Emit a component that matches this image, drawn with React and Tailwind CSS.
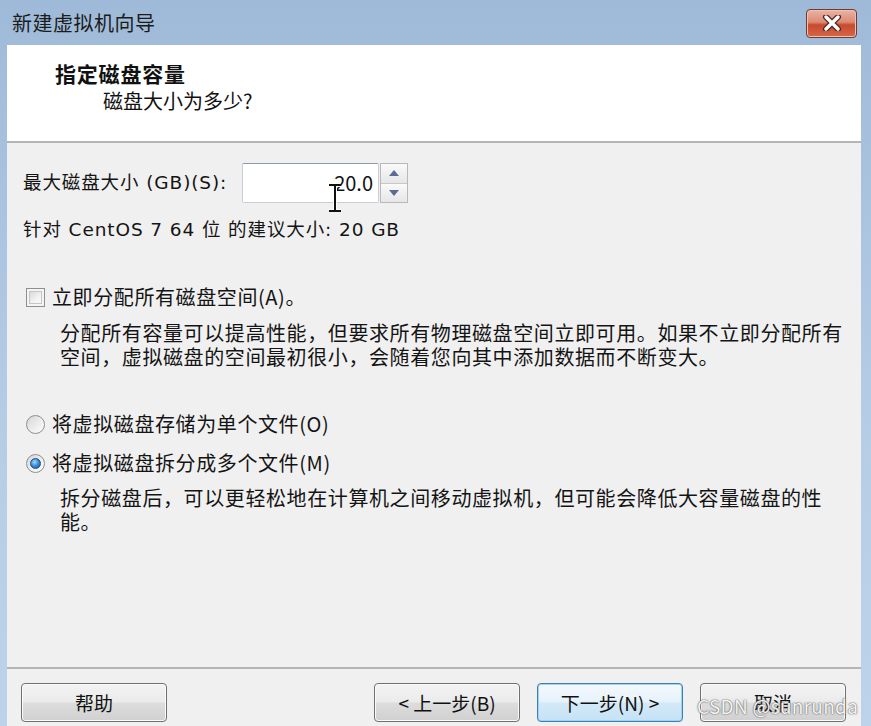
import React from "react";

const cjk = { fontFamily: '"Noto Sans CJK SC", "Noto Sans", sans-serif' };
// label row uses a wider latin face, like the Segoe UI of the dialog
const wide = { fontFamily: '"DejaVu Sans", "Noto Sans CJK SC", sans-serif' };

const WinButton = ({ children, focused }) => (
  <button
    type="button"
    className={`h-[39px] w-[146px] rounded-[4px] border text-[19px] leading-none text-[#111] ${
      focused
        ? "border-[#3c7fb1] bg-[linear-gradient(180deg,#f4f9fd_0%,#e6f2fb_48%,#d3e9f8_52%,#c6e2f6_100%)] shadow-[inset_0_0_0_1px_#9fd2f5]"
        : "border-[#707070] bg-[linear-gradient(180deg,#f3f3f3_0%,#ebebeb_48%,#dddddd_52%,#d0d0d0_100%)] shadow-[inset_0_0_0_1px_#fbfbfb]"
    }`}
    style={cjk}
  >
    {children}
  </button>
);

const Checkbox = () => (
  <span className="flex h-[19px] w-[19px] items-center justify-center border border-[#8f8f8f] bg-[#f4f4f4]">
    <span className="h-[13px] w-[13px] border border-[#c6c6c6] bg-[linear-gradient(135deg,#d9d9d9_0%,#f2f2f2_60%,#fafafa_100%)]" />
  </span>
);

const Radio = ({ checked }) => (
  <span className="flex h-[19px] w-[19px] items-center justify-center rounded-full border border-[#8f8f8f] bg-[linear-gradient(135deg,#d4d4d4_0%,#f6f6f6_70%)]">
    {checked ? (
      <span className="h-[11px] w-[11px] rounded-full border border-[#1f4f86] bg-[radial-gradient(circle_at_40%_35%,#a9dcff_0%,#3d8fd6_45%,#12508f_100%)]" />
    ) : (
      <span className="h-[13px] w-[13px] rounded-full bg-[linear-gradient(135deg,#dcdcdc_0%,#f9f9f9_100%)]" />
    )}
  </span>
);

export default function App() {
  return (
    <div
      className="relative flex h-[726px] w-[871px] flex-col overflow-hidden bg-[linear-gradient(180deg,#9fbad8_0%,#b6cde6_60%,#bcd3eb_100%)] text-[#141414]"
      style={cjk}
    >
      {/* title bar */}
      <div className="flex h-[45px] shrink-0 items-center justify-between pl-[12px] pr-[14px]">
        <span className="text-[20px] leading-none tracking-[0.5px] text-[#1b1b1b]">新建虚拟机向导</span>
        <div className="mt-[1px] flex h-[29px] w-[51px] items-center justify-center rounded-[4px] border border-[#6e3a33] bg-[linear-gradient(180deg,#eab3a5_0%,#dc8a72_45%,#c84a2c_55%,#d4674a_100%)] shadow-[inset_0_0_0_1px_#f0c0b0]">
          <svg width="20" height="16" viewBox="0 0 20 16">
            <path d="M4 2 L16 14 M16 2 L4 14" stroke="#4a2620" strokeWidth="6" strokeLinecap="round" />
            <path d="M4 2 L16 14 M16 2 L4 14" stroke="#ffffff" strokeWidth="3.4" strokeLinecap="round" />
          </svg>
        </div>
      </div>

      {/* body */}
      <div className="ml-[7px] mr-[10px] flex flex-1 flex-col bg-[#f0f0f0]">
        {/* header */}
        <div className="h-[96px] shrink-0 bg-white pt-[15px]">
          <div className="pl-[48px] text-[21px] font-bold leading-[26px] tracking-[0.8px] text-[#111]">指定磁盘容量</div>
          <div className="pl-[96px] pt-[2px] text-[20px] leading-[26px] text-[#111]">磁盘大小为多少?</div>
        </div>
        <div className="h-[2px] shrink-0 bg-[#b5b5b5]" />

        {/* content */}
        <div className="flex flex-1 flex-col pl-[16px]">
          <div className="mt-[20px] flex h-[40px] items-center">
            <span className="w-[219px] text-[18.5px] leading-none tracking-[0.9px]" style={wide}>最大磁盘大小 (GB)(S):</span>
            <div className="relative flex h-[40px] w-[137px] items-center justify-end rounded-[2px] border border-[#c9ced6] border-t-[#8e9aab] bg-white pr-[5px]">
              <span className="text-[20px] leading-none text-[#111]">20.0</span>
            </div>
            <div className="ml-[1px] flex h-[40px] w-[28px] flex-col border border-[#b8b8b8] bg-[#f3f3f3]">
              <div className="flex flex-1 items-center justify-center border-b border-[#c8c8c8] bg-[linear-gradient(180deg,#fafafa,#e6e6e6)]">
                <svg width="10" height="6" viewBox="0 0 10 6"><path d="M5 0 L10 6 H0 Z" fill="#5a6c94" /></svg>
              </div>
              <div className="flex flex-1 items-center justify-center bg-[linear-gradient(180deg,#fafafa,#e6e6e6)]">
                <svg width="10" height="6" viewBox="0 0 10 6"><path d="M0 0 H10 L5 6 Z" fill="#5a6c94" /></svg>
              </div>
            </div>
          </div>

          <div className="mt-[15px] text-[18.5px] leading-[24px] tracking-[0.9px]" style={wide}>针对 CentOS 7 64 位 的建议大小: 20 GB</div>

          <label className="mt-[43px] flex h-[24px] items-center">
            <span className="ml-[3px]"><Checkbox /></span>
            <span className="ml-[7px] text-[20px] leading-[24px] tracking-[0.6px]">立即分配所有磁盘空间(A)。</span>
          </label>
          <p className="mt-[12px] pl-[37px] text-[20px] leading-[24px] tracking-[0.6px]">
            分配所有容量可以提高性能，但要求所有物理磁盘空间立即可用。如果不立即分配所有
            <br />
            空间，虚拟磁盘的空间最初很小，会随着您向其中添加数据而不断变大。
          </p>

          <label className="mt-[43px] flex h-[24px] items-center">
            <span className="ml-[3px]"><Radio /></span>
            <span className="ml-[7px] text-[20px] leading-[24px] tracking-[0.6px]">将虚拟磁盘存储为单个文件(O)</span>
          </label>
          <label className="mt-[15px] flex h-[24px] items-center">
            <span className="ml-[3px]"><Radio checked /></span>
            <span className="ml-[7px] text-[20px] leading-[24px] tracking-[0.6px]">将虚拟磁盘拆分成多个文件(M)</span>
          </label>
          <p className="mt-[11px] pl-[37px] text-[20px] leading-[24px] tracking-[0.6px]">
            拆分磁盘后，可以更轻松地在计算机之间移动虚拟机，但可能会降低大容量磁盘的性
            <br />
            能。
          </p>
        </div>

        <div className="h-[2px] shrink-0 bg-[#b5b5b5]" />
        {/* footer */}
        <div className="flex h-[57px] shrink-0 items-start pl-[14px] pr-[15px] pt-[14px]">
          <WinButton>帮助</WinButton>
          <div className="ml-auto flex gap-[17px]">
            <WinButton>&lt; 上一步(B)</WinButton>
            <WinButton focused>下一步(N) &gt;</WinButton>
            <WinButton>取消</WinButton>
          </div>
        </div>
      </div>

      {/* mouse cursor */}
      <svg className="absolute left-[327px] top-[184px]" width="16" height="28" viewBox="0 0 16 28">
        <path d="M2 1 H14 M8 1 V27 M2 27 H14" stroke="#ffffff" strokeWidth="4" />
        <path d="M2 1 H14 M8 1 V27 M2 27 H14" stroke="#111" strokeWidth="2" />
      </svg>

      {/* watermark */}
      <span className="absolute left-[697px] top-[696px] text-[19px] leading-none tracking-[0.3px] text-[#f4f4f4] [text-shadow:0_0_1px_#555,0_0_2px_#777]">
        CSDN @sunrunda
      </span>
    </div>
  );
}
